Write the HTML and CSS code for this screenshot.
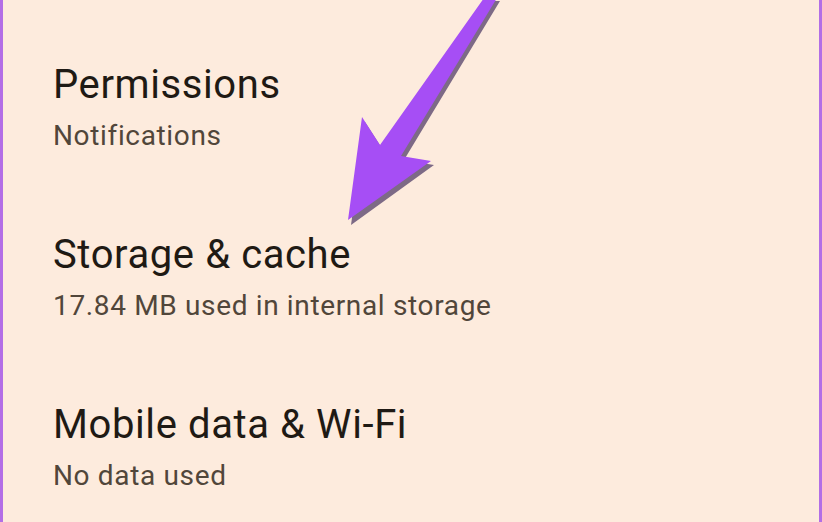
FILE: index.html
```html
<!DOCTYPE html>
<html>
<head>
    <title>App info</title>
    <link rel="stylesheet" href="styles.css">
</head>
<body>
    <div class="screen">
        <div class="setting">
            <div class="title">Permissions</div>
            <div class="summary">Notifications</div>
        </div>
        <div class="setting">
            <div class="title">Storage &amp; cache</div>
            <div class="summary">17.84 MB used in internal storage</div>
        </div>
        <div class="setting">
            <div class="title">Mobile data &amp; Wi-Fi</div>
            <div class="summary">No data used</div>
        </div>

        <!-- annotation arrow pointing at storage -->
        <svg class="arrow" width="822" height="522" viewBox="0 0 822 522">
            <polygon class="arrow-shadow" points="485,-2 498,-2 402,157 432,162 349,222 363,119 381,147" transform="translate(2,3)"/>
            <polygon class="arrow-body" points="484,-2 497,-2 401,156 431,161 348,220 362,117 380,145"/>
        </svg>
    </div>
</body>
</html>
```

FILE: styles.css
```css
html, body {
    margin: 0;
    padding: 0;
}
body {
    background-color: #fdebdd;
    font-family: Roboto, "Noto Sans", sans-serif;
}
.screen {
    position: relative;
    height: 522px;
    box-sizing: border-box;
    border-left: 3px solid #b36ee6;
    border-right: 3px solid #b36ee6;
    padding: 57px 0 0 50px;
    display: flex;
    flex-direction: column;
    gap: 71px;
    overflow: hidden;
}
.title {
    font-size: 40px;
    line-height: 56px;
    letter-spacing: 0.6px;
    color: #1f1a14;
    margin-bottom: 3px;
}
.summary {
    font-size: 28px;
    line-height: 40px;
    letter-spacing: 0.65px;
    color: #51463a;
}
.arrow {
    position: absolute;
    top: 0;
    left: -3px;
}
.arrow-shadow {
    fill: #7d6a86;
}
.arrow-body {
    fill: #a64ef5;
}
```
